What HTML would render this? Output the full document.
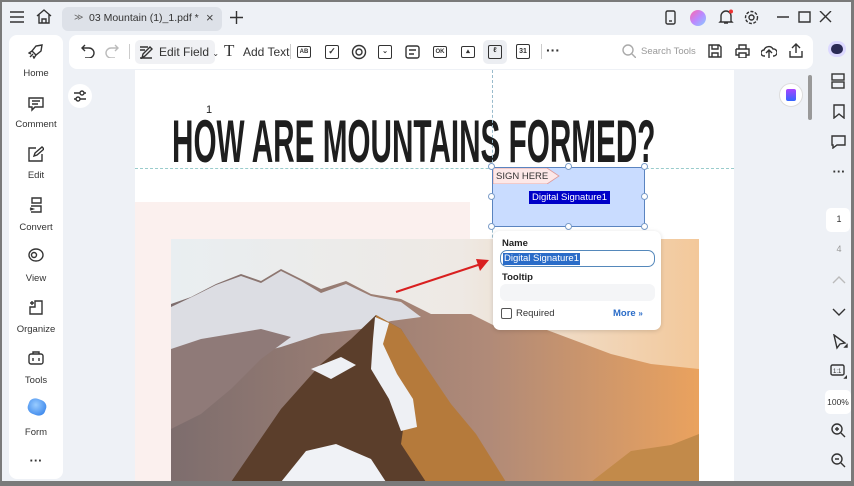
<!DOCTYPE html>
<html><head><meta charset="utf-8"><style>
*{margin:0;padding:0;box-sizing:border-box}
body{width:854px;height:486px;overflow:hidden;background:#7a7a7a;font-family:"Liberation Sans",sans-serif;position:relative}
.win{position:absolute;left:2px;top:2px;width:849px;height:479px;background:#eef1f6;overflow:hidden}
.abs{position:absolute}
.ic{position:absolute;stroke:#333;fill:none;stroke-width:1.4}
.side{position:absolute;left:7px;top:33px;width:54px;height:444px;background:#fff;border-radius:8px}
.si{position:absolute;left:0;width:54px;text-align:center;font-size:9.5px;color:#333}
.tb{position:absolute;left:67px;top:33px;width:744px;height:34px;background:#fff;border-radius:8px}
.small{font-size:12px;color:#333}
.box{position:absolute;width:14px;height:12px;border:1.3px solid #333;border-radius:2px;font-size:6px;font-weight:bold;text-align:center;line-height:10px;color:#333}
.h{position:absolute;width:7px;height:7px;border:1px solid #7a9cc8;background:#fff;border-radius:50%}
.rt{position:absolute;left:824px;font-size:9px;color:#333;text-align:center;width:26px}
</style></head><body>
<div class="win">
<svg class="ic" style="left:8px;top:9px" width="14" height="12"><path d="M0 1h14M0 6h14M0 11h14"/></svg>
<svg class="ic" style="left:34px;top:7px" width="16" height="15"><path d="M1 7L8 1l7 6M3 5v9h10V5M6 14v-4h4v4"/></svg>
<div class="abs" style="left:60px;top:5px;width:160px;height:24px;background:#dde1e8;border-radius:6px"></div>
<div class="abs small" style="left:72px;top:10px;font-size:9px;color:#666">≫</div>
<div class="abs small" style="left:87px;top:10px;font-size:10.5px">03 Mountain (1)_1.pdf *</div>
<div class="abs small" style="left:204px;top:8px;font-size:13px;color:#444">×</div>
<svg class="ic" style="left:228px;top:9px" width="13" height="13"><path d="M6.5 0v13M0 6.5h13"/></svg>
<svg class="ic" style="left:663px;top:8px" width="11" height="15"><rect x="1" y="1" width="9" height="13" rx="1.5"/><path d="M4 11h3"/></svg>
<div class="abs" style="left:688px;top:8px;width:16px;height:16px;border-radius:50%;background:linear-gradient(135deg,#f6a,#b8f,#8cf)"></div>
<svg class="ic" style="left:716px;top:7px" width="16" height="16"><path d="M3 12V7a5 5 0 0110 0v5l1 1H2zM6 14h4"/><circle cx="13" cy="2.5" r="2" fill="#e33" stroke="none"/></svg>
<svg class="ic" style="left:742px;top:8px" width="15" height="15"><circle cx="7.5" cy="7.5" r="2.5"/><circle cx="7.5" cy="7.5" r="6" stroke-dasharray="3 1.5"/></svg>
<svg class="ic" style="left:775px;top:9px" width="60" height="12"><path d="M0 6h12M22 1h11v10H22zM43 0l11 11M54 0L43 11"/></svg>
<div class="side">
<svg class="ic" style="left:19px;top:8px" width="16" height="16"><path d="M14 2l-6 1-4 5 4 4 5-4zM4 8l-3 2 2 1M8 12l-2 3-1-2M2 14l3-3"/></svg>
<div class="si" style="top:33px">Home</div>
<svg class="ic" style="left:19px;top:61px" width="16" height="16"><path d="M1 2h14v9H7l-3 3v-3H1z M4 5h8M4 8h6"/></svg>
<div class="si" style="top:84px">Comment</div>
<svg class="ic" style="left:19px;top:111px" width="16" height="16"><path d="M8 2H1v13h13V8M6 10l1-3 7-6 2 2-7 6z"/></svg>
<div class="si" style="top:135px">Edit</div>
<svg class="ic" style="left:20px;top:162px" width="14" height="16"><path d="M3 1h9v5H3zM2 9h10v6H2M1 11l3 1-3 1"/></svg>
<div class="si" style="top:187px">Convert</div>
<svg class="ic" style="left:19px;top:213px" width="16" height="14"><ellipse cx="8" cy="7" rx="7" ry="6"/><circle cx="6" cy="7" r="2.5"/></svg>
<div class="si" style="top:238px">View</div>
<svg class="ic" style="left:20px;top:264px" width="14" height="16"><path d="M6 2h7v13H1V8h5zM1 4h4M3 2v4"/></svg>
<div class="si" style="top:289px">Organize</div>
<svg class="ic" style="left:19px;top:316px" width="16" height="14"><rect x="1" y="3" width="14" height="10" rx="2"/><path d="M5 3V1h6v2M5 7v3M11 7v3"/></svg>
<div class="si" style="top:340px">Tools</div>
<div class="abs" style="left:19px;top:364px;width:18px;height:16px;border-radius:40%;background:radial-gradient(circle at 40% 40%,#9cf,#2a7ae8);transform:rotate(20deg)"></div>
<div class="si" style="top:392px">Form</div>
<div class="si" style="top:418px;font-size:13px;font-weight:bold">···</div>
</div>
<div class="tb">
<svg class="ic" style="left:12px;top:9px" width="14" height="14"><path d="M4 1L1 4l3 3M1 4h7a5 5 0 010 10H4"/></svg>
<svg class="ic" style="left:36px;top:9px;stroke:#bbb" width="14" height="14"><path d="M10 1l3 3-3 3M13 4H6a5 5 0 000 10h4"/></svg>
<div class="abs" style="left:60px;top:9px;width:1px;height:15px;background:#ccc"></div>
<div class="abs" style="left:66px;top:5px;width:80px;height:24px;background:#f0f1f4;border-radius:5px"></div>
<svg class="ic" style="left:70px;top:10px" width="14" height="14"><path d="M1 2h8M1 5h5M3 13l1-4 7-7 2 2-7 7zM1 13h12"/></svg>
<div class="abs small" style="left:90px;top:10px">Edit Field <span style="font-size:8px">⌄</span></div>
<div class="abs" style="left:155px;top:6px;font-family:'Liberation Serif',serif;font-size:17px;color:#333">T</div>
<div class="abs small" style="left:174px;top:10px">Add Text</div>
<div class="abs" style="left:221px;top:9px;width:1px;height:15px;background:#ccc"></div>
<div class="box" style="left:228px;top:11px">AB</div>
<div class="box" style="left:256px;top:10px;height:14px;font-size:9px;line-height:11px">✓</div>
<svg class="ic" style="left:282px;top:9px" width="16" height="16"><circle cx="8" cy="8" r="6.5"/><circle cx="8" cy="8" r="3"/></svg>
<div class="box" style="left:309px;top:10px;height:14px;font-size:7px;line-height:11px">⌄</div>
<svg class="ic" style="left:336px;top:10px" width="15" height="14"><rect x="1" y="1" width="13" height="12" rx="2"/><path d="M4 5h7M4 9h5"/></svg>
<div class="box" style="left:364px;top:11px">OK</div>
<div class="box" style="left:392px;top:11px;font-size:5px">⛰</div>
<div class="abs" style="left:414px;top:5px;width:24px;height:24px;background:#eceef2;border-radius:5px"></div>
<div class="box" style="left:419px;top:10px;height:14px;font-size:7px">ℓ</div>
<div class="box" style="left:447px;top:9px;height:15px;font-size:7px;line-height:13px">31</div>
<div class="abs" style="left:472px;top:9px;width:1px;height:15px;background:#ccc"></div>
<div class="abs" style="left:477px;top:7px;font-size:14px;font-weight:bold;color:#333">···</div>
<svg class="ic" style="left:553px;top:9px;stroke:#aaa" width="14" height="14"><circle cx="6" cy="6" r="5"/><path d="M10 10l4 4"/></svg>
<div class="abs" style="left:572px;top:11px;font-size:9.5px;color:#999">Search Tools</div>
<svg class="ic" style="left:639px;top:9px" width="14" height="14"><path d="M1 1h10l2 2v10H1zM4 1v4h6V1M4 13V9h6v4"/></svg>
<svg class="ic" style="left:666px;top:9px" width="15" height="14"><path d="M4 5V1h7v4M1 5h13v6h-3M4 11H1V5M4 9h7v5H4z"/></svg>
<svg class="ic" style="left:692px;top:9px" width="16" height="14"><path d="M4 12H3a3 3 0 010-6 5 5 0 019-1 3.5 3.5 0 011 7h-1M8 14V7M5 9l3-3 3 3"/></svg>
<svg class="ic" style="left:720px;top:8px" width="14" height="15"><path d="M7 10V1M3 5l4-4 4 4M1 8v6h12V8"/></svg>
</div>
<div class="abs" style="left:829px;top:42px;width:12px;height:10px;border-radius:5px;background:#2a2a55;box-shadow:0 0 0 3px #dcd8ff"></div>
<div class="abs" style="left:66px;top:82px;width:24px;height:24px;background:#fff;border-radius:50%"></div>
<svg class="ic" style="left:71px;top:87px" width="14" height="14"><path d="M1 4h12M1 10h12"/><circle cx="9" cy="4" r="2" fill="#fff"/><circle cx="5" cy="10" r="2" fill="#fff"/></svg>
<div class="abs" style="left:133px;top:68px;width:599px;height:412px;background:#fff;overflow:hidden">
 <div class="abs" style="left:0;top:132px;width:335px;height:300px;background:#fbf0ee"></div>
 <div class="abs" style="left:71px;top:34px;font-size:11px;color:#222">1</div>
 <div class="abs" style="left:37px;top:42px;font-size:60px;line-height:60px;font-weight:bold;color:#1e1e1e;transform:scaleX(0.495);transform-origin:0 0;white-space:nowrap">HOW ARE MOUNTAINS FORMED?</div>
 <div class="abs" style="left:0;top:98px;width:599px;border-top:1px dashed #9cc"></div>
 <div class="abs" style="left:357px;top:0;height:412px;border-left:1px dashed #9bc"></div>
 <svg class="abs" style="left:36px;top:169px" width="528" height="243" viewBox="0 0 528 243">
  <defs><linearGradient id="sky" x1="0" x2="1" y1="0" y2="0"><stop offset="0" stop-color="#e9eef1"/><stop offset="0.55" stop-color="#eee9e4"/><stop offset="1" stop-color="#f3c89a"/></linearGradient>
  <linearGradient id="bg" x1="0" x2="1"><stop offset="0" stop-color="#7d6d6d"/><stop offset="0.6" stop-color="#b08a78"/><stop offset="1" stop-color="#eaa25e"/></linearGradient></defs>
  <rect width="528" height="243" fill="url(#sky)"/>
  <path d="M0 65L20 58 45 45 70 35 90 42 110 30 130 40 150 50 175 42 200 55 230 60 260 75 300 75 330 90 360 85 400 100 440 115 480 125 528 130V243H0z" fill="url(#bg)"/>
  <path d="M0 68L25 56 45 46 70 37 90 44 110 32 130 42 150 54 175 45 200 57 230 63 250 78 220 82 190 90 150 95 110 108 70 118 30 130 0 140z" fill="#dcdde3"/>
  <path d="M0 110L30 100 60 95 90 90 120 98 90 120 60 150 30 175 0 190z" fill="#8f7a78"/>
  <path d="M60 243L110 170 150 125 180 100 205 76 230 90 255 130 285 175 330 243z" fill="#5b3e2b"/>
  <path d="M205 76L230 90 255 128 280 165 305 195 335 243H255L230 205 235 170 222 140 205 115z" fill="#b57a3b"/>
  <path d="M204 78L218 84 212 105 226 135 242 160 246 188 230 192 218 160 200 130 202 100z" fill="#eef0f4"/>
  <path d="M140 130L170 118 185 126 160 140z" fill="#eef0f4"/>
  <path d="M110 243L135 212 165 205 200 220 215 243z" fill="#f0f2f6"/>
  <path d="M420 243L460 212 500 206 528 195V243z" fill="#c28a4a"/>
 </svg>
</div>
<div class="abs" style="left:490px;top:165px;width:153px;height:60px;background:#c9dcff;border:1px solid #5a84c0"></div>
<svg class="abs" style="left:491px;top:166px" width="68" height="16"><path d="M0 0h54l12 8-12 8H0z" fill="#fde8e8" stroke="#d99" stroke-width="0.8"/><text x="3" y="11" font-size="9.5" font-family="Liberation Sans" fill="#333">SIGN HERE</text></svg>
<div class="abs" style="left:527px;top:189px;background:#0000c8;color:#fff;font-size:9.5px;padding:1px 3px">Digital Signature1</div>
<div class="h" style="left:486px;top:161px"></div><div class="h" style="left:563px;top:161px"></div><div class="h" style="left:639px;top:161px"></div>
<div class="h" style="left:486px;top:191px"></div><div class="h" style="left:639px;top:191px"></div>
<div class="h" style="left:486px;top:221px"></div><div class="h" style="left:563px;top:221px"></div><div class="h" style="left:639px;top:221px"></div>
<div class="abs" style="left:491px;top:229px;width:168px;height:99px;background:#fff;border-radius:7px;box-shadow:0 1px 5px rgba(0,0,0,.15)"></div>
<div class="abs" style="left:500px;top:236px;font-size:9.5px;font-weight:bold;color:#222">Name</div>
<div class="abs" style="left:498px;top:248px;width:155px;height:17px;border:1.3px solid #5588bb;border-radius:7px"></div>
<div class="abs" style="left:501px;top:251px;background:#2a6cc8;color:#fff;font-size:9.5px;padding:0 1px;line-height:12px">Digital Signature1</div>
<div class="abs" style="left:500px;top:270px;font-size:9.5px;font-weight:bold;color:#222">Tooltip</div>
<div class="abs" style="left:498px;top:282px;width:155px;height:17px;background:#f4f5f7;border-radius:6px"></div>
<div class="abs" style="left:499px;top:306px;width:11px;height:11px;border:1.2px solid #555;border-radius:2px"></div>
<div class="abs" style="left:514px;top:306px;font-size:9.5px;color:#333">Required</div>
<div class="abs" style="left:611px;top:306px;font-size:9.5px;color:#2a6cc8;font-weight:bold">More <span style="font-size:8px">»</span></div>
<svg class="abs" style="left:390px;top:250px" width="110" height="45"><path d="M4 40L92 11" stroke="#d92020" stroke-width="2"/><path d="M97 8L84 7 88 19z" fill="#d92020"/></svg>
<div class="abs" style="left:777px;top:81px;width:24px;height:24px;border-radius:50%;background:#fff;border:1px solid #ddd"></div>
<div class="abs" style="left:784px;top:87px;width:10px;height:12px;border-radius:2px;background:linear-gradient(#a4f,#36f)"></div>
<div class="abs" style="left:806px;top:73px;width:4px;height:45px;background:#999;border-radius:2px"></div>
<svg class="ic" style="left:829px;top:71px" width="14" height="16"><rect x="1" y="1" width="12" height="6"/><rect x="1" y="9" width="12" height="6"/></svg>
<svg class="ic" style="left:831px;top:102px" width="12" height="15"><path d="M1 1h10v13L6 10 1 14z"/></svg>
<svg class="ic" style="left:829px;top:133px" width="15" height="14"><path d="M1 1h13v9H6l-4 3v-3H1z"/></svg>
<div class="rt" style="top:162px;font-size:13px;font-weight:bold">···</div>
<div class="abs" style="left:824px;top:206px;width:24px;height:24px;background:#fff;border-radius:5px"></div>
<div class="rt" style="top:212px">1</div>
<div class="rt" style="top:242px;color:#999">4</div>
<svg class="ic" style="left:830px;top:274px;stroke:#bbb" width="14" height="8"><path d="M1 7l6-6 6 6"/></svg>
<svg class="ic" style="left:830px;top:306px" width="14" height="8"><path d="M1 1l6 6 6-6"/></svg>
<svg class="ic" style="left:830px;top:332px" width="16" height="16"><path d="M2 1l11 8-5 1-3 4z"/><path d="M13 13h2v-2z" fill="#333"/></svg>
<svg class="ic" style="left:828px;top:362px" width="17" height="15"><rect x="1" y="1" width="13" height="10" rx="1.5"/><text x="3" y="9" font-size="6" fill="#333" stroke="none" font-family="Liberation Sans">1:1</text><path d="M15 14h2v-2z" fill="#333"/></svg>
<div class="abs" style="left:823px;top:388px;width:26px;height:24px;background:#fff;border-radius:5px"></div>
<div class="rt" style="top:395px;left:823px;font-size:8.5px">100%</div>
<svg class="ic" style="left:829px;top:421px" width="15" height="15"><circle cx="6" cy="6" r="5"/><path d="M10 10l4 4M4 6h4M6 4v4"/></svg>
<svg class="ic" style="left:829px;top:451px" width="15" height="15"><circle cx="6" cy="6" r="5"/><path d="M10 10l4 4M4 6h4"/></svg>
</div>
</body></html>
